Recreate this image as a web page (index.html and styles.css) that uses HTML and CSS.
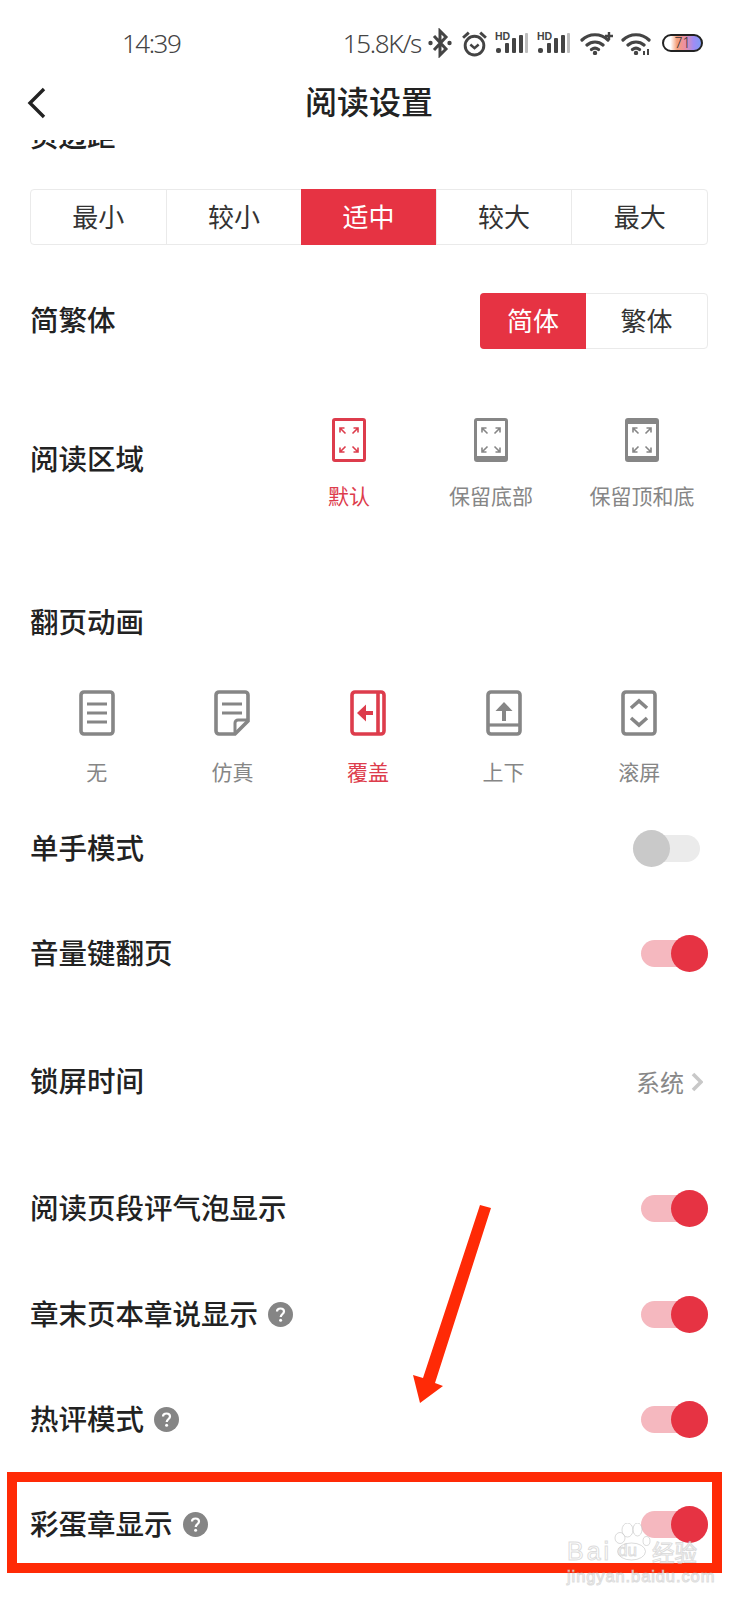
FILE: index.html
```html
<!DOCTYPE html>
<html lang="zh-CN">
<head>
    <meta charset="UTF-8">
    <meta name="viewport" content="width=device-width, initial-scale=1.0">
    <title>阅读设置</title>
    <link rel="stylesheet" href="styles.css">
</head>
<body>
    <svg class="defs" width="0" height="0">
        <symbol id="signal-bars" viewBox="0 0 36 24">
            <rect x="2" y="17" width="5" height="5" rx="2"/>
            <rect x="11" y="12" width="4" height="10" rx="1"/>
            <rect x="18" y="7" width="4" height="15" rx="1"/>
            <rect x="25" y="4" width="4" height="18" rx="1"/>
            <rect x="31" y="2" width="3" height="20" rx="1" fill="#bdbdbd"/>
        </symbol>
        <symbol id="wifi" viewBox="0 0 30 24">
            <path d="M2 9C9 2 21 2 28 9M7 14C11.500 10 18.500 10 23 14M11.500 18.500C13.500 17 16.500 17 18.500 18.500" fill="none" stroke="#444" stroke-width="3.200" stroke-linecap="round"/>
            <circle cx="15" cy="22" r="2.200" fill="#444"/>
        </symbol>
        <symbol id="expand-arrows" viewBox="0 0 34 44">
            <path d="M8 10l5.500 5.500M8 14.500V10h4.500M26 10l-5.500 5.500M26 14.500V10h-4.500M8 34l5.500-5.500M8 29.500V34h4.500M26 34l-5.500-5.500M26 29.500V34h-4.500" fill="none" stroke="currentColor" stroke-width="1.600"/>
        </symbol>
        <symbol id="help" viewBox="0 0 25 25">
            <circle cx="12.500" cy="12.500" r="12.500" fill="#858585"/>
            <path d="M9 9.500C9 7.500 10.500 6.500 12.500 6.500S16 7.700 16 9.500C16 12 13 12 12.700 15" fill="none" stroke="#fff" stroke-width="2.200"/>
            <circle cx="12.600" cy="18.300" r="1.500" fill="#fff"/>
        </symbol>
    </svg>

    <div class="page">
        <div class="status-bar">
            <span class="status-time">14:39</span>
            <div class="status-right">
                <span class="status-speed">15.8K/s</span>
                <svg class="ic-bt" viewBox="0 0 24 30"><path d="M6 8l12 13-6 6V3l6 6L6 22" fill="none" stroke="#444" stroke-width="3"/><circle cx="2.500" cy="15" r="2.200" fill="#444"/><circle cx="21.500" cy="15" r="2.200" fill="#444"/></svg>
                <svg class="ic-alarm" viewBox="0 0 26 26"><circle cx="13" cy="15" r="9" fill="none" stroke="#444" stroke-width="2.800"/><path d="M9 14l4 3.500 4-3.500" fill="none" stroke="#444" stroke-width="2.400"/><path d="M2 7.500L7.500 2.500M24 7.500L18.500 2.500" fill="none" stroke="#444" stroke-width="2.800"/></svg>
                <svg class="ic-signal" viewBox="0 0 36 24"><text x="1" y="9" class="hd-text">HD</text><use href="#signal-bars" width="36" height="24"/></svg>
                <svg class="ic-signal" viewBox="0 0 36 24"><text x="1" y="9" class="hd-text">HD</text><use href="#signal-bars" width="36" height="24"/></svg>
                <svg class="ic-wifi-plus" viewBox="0 0 34 24"><use href="#wifi" width="30" height="24"/><path d="M25 5h8M29 1v8" stroke="#444" stroke-width="2.400"/></svg>
                <svg class="ic-wifi" viewBox="0 0 32 24"><use href="#wifi" width="30" height="24"/><path d="M23 20v4M27 18v6" stroke="#444" stroke-width="2"/></svg>
                <div class="battery"><span class="battery-num">71</span></div>
            </div>
        </div>

        <div class="nav-bar">
            <svg class="nav-back" viewBox="0 0 20 32"><path d="M17 2L3 16l14 14" fill="none" stroke="#222" stroke-width="3.400"/></svg>
            <h1 class="nav-title">阅读设置</h1>
        </div>

        <div class="settings">
            <div class="cut-label"><span>页边距</span></div>

            <div class="segment segment-five">
                <div class="segment-item">最小</div>
                <div class="segment-item">较小</div>
                <div class="segment-item active">适中</div>
                <div class="segment-item">较大</div>
                <div class="segment-item">最大</div>
            </div>

            <div class="script-row">
                <div class="label">简繁体</div>
                <div class="segment segment-two">
                    <div class="segment-item active">简体</div>
                    <div class="segment-item">繁体</div>
                </div>
            </div>

            <div class="area-row">
                <div class="label area-label">阅读区域</div>
                <div class="area-options">
                    <div class="option active">
                        <div class="frame frame-plain"><svg><use href="#expand-arrows"/></svg></div>
                        <span>默认</span>
                    </div>
                    <div class="option">
                        <div class="frame frame-bottom"><svg><use href="#expand-arrows"/></svg></div>
                        <span>保留底部</span>
                    </div>
                    <div class="option">
                        <div class="frame frame-both"><svg><use href="#expand-arrows"/></svg></div>
                        <span>保留顶和底</span>
                    </div>
                </div>
            </div>

            <div class="label anim-title">翻页动画</div>
            <div class="anim-options">
                <div class="option">
                    <svg class="anim-icon" viewBox="0 0 36 46"><rect x="2" y="2" width="32" height="42" rx="3" fill="none" stroke="currentColor" stroke-width="3.600"/><path d="M8 14h20M8 23h20M8 32h20" stroke="currentColor" stroke-width="3.200"/></svg>
                    <span>无</span>
                </div>
                <div class="option">
                    <svg class="anim-icon" viewBox="0 0 36 46"><path d="M5 2h26a3 3 0 0 1 3 3v26L21 44H5a3 3 0 0 1-3-3V5a3 3 0 0 1 3-3z" fill="none" stroke="currentColor" stroke-width="3.600"/><path d="M8 14h20M8 23h20" stroke="currentColor" stroke-width="3.200"/><path d="M34 30H24a3 3 0 0 0-3 3v11" fill="none" stroke="currentColor" stroke-width="3"/></svg>
                    <span>仿真</span>
                </div>
                <div class="option active">
                    <svg class="anim-icon" viewBox="0 0 36 46"><rect x="2" y="2" width="32" height="42" rx="3" fill="none" stroke="currentColor" stroke-width="3.600"/><path d="M28 2v42" stroke="currentColor" stroke-width="3.600"/><path d="M23 23H12" stroke="currentColor" stroke-width="4"/><path d="M16 14.500L7 23l9 8.500z" fill="currentColor"/></svg>
                    <span>覆盖</span>
                </div>
                <div class="option">
                    <svg class="anim-icon" viewBox="0 0 36 46"><rect x="2" y="2" width="32" height="42" rx="3" fill="none" stroke="currentColor" stroke-width="3.600"/><path d="M2 35h32" stroke="currentColor" stroke-width="3.200"/><path d="M18 31V19" stroke="currentColor" stroke-width="4"/><path d="M9.500 21L18 12l8.500 9z" fill="currentColor"/></svg>
                    <span>上下</span>
                </div>
                <div class="option">
                    <svg class="anim-icon" viewBox="0 0 36 46"><rect x="2" y="2" width="32" height="42" rx="3" fill="none" stroke="currentColor" stroke-width="3.600"/><path d="M10 18l8-7 8 7M10 28l8 7 8-7" fill="none" stroke="currentColor" stroke-width="3.600"/></svg>
                    <span>滚屏</span>
                </div>
            </div>

            <div class="rows">
                <div class="row">
                    <div class="label">单手模式</div>
                    <div class="toggle off"></div>
                </div>
                <div class="row">
                    <div class="label">音量键翻页</div>
                    <div class="toggle"></div>
                </div>
                <div class="row row-spaced">
                    <div class="label">锁屏时间</div>
                    <div class="row-value">
                        系统
                        <svg class="value-arrow" viewBox="0 0 12 20"><path d="M2 2l8 8-8 8" fill="none" stroke="#c8c8c8" stroke-width="3.600"/></svg>
                    </div>
                </div>
                <div class="row row-bubble">
                    <div class="label">阅读页段评气泡显示</div>
                    <div class="toggle"></div>
                </div>
                <div class="row row-after">
                    <div class="label">章末页本章说显示<svg class="help"><use href="#help"/></svg></div>
                    <div class="toggle"></div>
                </div>
                <div class="row">
                    <div class="label">热评模式<svg class="help"><use href="#help"/></svg></div>
                    <div class="toggle"></div>
                </div>
                <div class="row">
                    <div class="label">彩蛋章显示<svg class="help"><use href="#help"/></svg></div>
                    <div class="toggle"></div>
                </div>
            </div>
        </div>

        <!-- красная разметка поверх скриншота -->
        <svg class="mark-arrow" viewBox="0 0 90 210"><path d="M68 0L79 3 23 178 31 181 8 198 1 170 11 173z" fill="#ff2a06"/></svg>
        <div class="mark-box"></div>

        <div class="watermark">
            <svg class="wm-paw" viewBox="0 0 42 38"><ellipse cx="10" cy="15" rx="5" ry="5.500"/><ellipse cx="17.500" cy="7" rx="5.500" ry="7"/><ellipse cx="27.500" cy="6.500" rx="4.500" ry="6.500"/><ellipse cx="36.500" cy="18" rx="3.500" ry="4.500"/><ellipse cx="21.500" cy="28.500" rx="14" ry="8.500"/></svg>
            <div class="wm-logo"><span class="wm-bai">Bai</span><span class="wm-du">du</span><span class="wm-cn">经验</span></div>
            <div class="wm-url">jingyan.baidu.com</div>
        </div>
    </div>
</body>
</html>
```

FILE: styles.css
```css
* {
    box-sizing: border-box;
}

body {
    margin: 0;
    background-color: #ffffff;
    font-family: "Noto Sans CJK SC", "Noto Sans", sans-serif;
    color: #222222;
    overflow-x: hidden;
}

.defs {
    position: absolute;
}

.hd-text {
    font-family: "Liberation Sans", sans-serif;
    font-size: 10.500px;
    font-weight: 700;
    fill: #444444;
}

.page {
    position: relative;
    width: 738px;
    height: 1600px;
    overflow: hidden;
}

/* status bar */
.status-bar {
    height: 80px;
    padding: 6px 35px 0 122px;
    display: flex;
    align-items: center;
    justify-content: space-between;
    font-family: "Noto Sans", sans-serif;
    font-size: 26px;
    color: #444444;
}

.status-time {
    font-weight: 300;
    letter-spacing: -1.500px;
}

.status-right {
    display: flex;
    align-items: center;
}

.status-speed {
    font-weight: 300;
    letter-spacing: -1.300px;
    margin-right: 7px;
}

.ic-bt {
    width: 24px;
    height: 30px;
}

.ic-alarm {
    width: 27px;
    height: 27px;
    margin-left: 9px;
}

.ic-signal {
    width: 36px;
    height: 24px;
    fill: #444444;
    margin-left: 6px;
}

.ic-wifi-plus {
    width: 34px;
    height: 24px;
    margin-left: 8px;
}

.ic-wifi {
    width: 32px;
    height: 24px;
    margin-left: 7px;
}

.battery {
    width: 41px;
    height: 18px;
    margin-left: 9px;
    border: 2px solid #222222;
    border-radius: 9px;
    background: linear-gradient(90deg, #ffffff 0%, #ffffff 18%, #f5a07a 35%, #ee8fa0 55%, #a08cf5 80%, #7f9cf5 100%);
    font-size: 14px;
    line-height: 14px;
    text-align: center;
    color: #333333;
}

.battery-num {
    font-weight: 300;
}

/* nav */
.nav-bar {
    height: 60px;
    padding-bottom: 20px;
    display: flex;
    align-items: center;
    justify-content: center;
    position: relative;
}

.nav-back {
    position: absolute;
    left: 27px;
    top: 7px;
    width: 20px;
    height: 32px;
}

.nav-title {
    margin: 0;
    font-size: 32px;
    font-weight: 500;
    line-height: 40px;
}

/* settings */
.settings {
    padding: 0 30px;
}

.label {
    font-size: 28.500px;
    font-weight: 500;
    line-height: 36px;
    padding-bottom: 4px;
    display: flex;
    align-items: center;
}

.cut-label {
    height: 10px;
    overflow: hidden;
    display: flex;
    align-items: flex-end;
    font-size: 28.500px;
    font-weight: 500;
    line-height: 30px;
}

.cut-label span {
    display: block;
    flex: none;
}

.segment {
    display: flex;
    border: 1px solid #eaeaea;
    border-radius: 4px;
    height: 56px;
    font-size: 26px;
    color: #333333;
}

.segment-five {
    margin-top: 39px;
    width: 678px;
}

.segment-two {
    width: 228px;
}

.segment-item {
    flex: 1;
    display: flex;
    align-items: center;
    justify-content: center;
    padding-bottom: 3px;
    border-left: 1px solid #eaeaea;
}

.segment-item:first-child {
    border-left: none;
}

.segment-item.active {
    margin: -1px 0;
    background-color: #e63343;
    color: #ffffff;
    border-left: none;
}

.segment-two .segment-item.active {
    flex: none;
    width: 106px;
    margin: -1px 0 -1px -1px;
    border-radius: 4px 0 0 4px;
}

.segment-two .segment-item {
    border-left: none;
}

.script-row {
    margin-top: 48px;
    display: flex;
    align-items: center;
    justify-content: space-between;
}

.area-row {
    margin-top: 69px;
    height: 94px;
    display: flex;
    align-items: flex-start;
    justify-content: space-between;
}

.area-label {
    margin-top: 22px;
}

.area-options {
    display: grid;
    grid-template-columns: 120px 164px 138px;
    margin-right: -3px;
}

.option {
    display: flex;
    flex-direction: column;
    align-items: center;
    color: #868686;
    font-size: 21px;
    line-height: 30px;
}

.option.active {
    color: #dd3c4c;
}

.frame {
    width: 34px;
    height: 44px;
    margin-bottom: 18px;
    border: 3px solid currentColor;
    border-radius: 3px;
    position: relative;
}

.frame svg {
    position: absolute;
    left: -3px;
    top: -3px;
    width: 34px;
    height: 44px;
}

.frame-bottom {
    border-bottom-width: 6px;
}

.frame-both {
    border-top-width: 6px;
    border-bottom-width: 6px;
}

.frame-both svg {
    top: -6px;
}

.anim-title {
    margin-top: 91px;
}

.anim-options {
    margin: 47px 0 0 -1px;
    display: grid;
    grid-template-columns: repeat(5, 1fr);
    width: 678px;
}

.anim-icon {
    width: 36px;
    height: 46px;
    margin-bottom: 20px;
}

/* rows */
.rows {
    margin-top: 10px;
}

.row {
    height: 105px;
    display: flex;
    align-items: center;
    justify-content: space-between;
}

.row-spaced {
    margin-top: 23px;
}

.row-bubble {
    margin-top: 22px;
}

.row-after {
    margin-top: 1px;
}

.help {
    width: 25px;
    height: 25px;
    margin: 4px 0 0 10px;
}

.toggle {
    position: relative;
    width: 67px;
    height: 27px;
    border-radius: 14px;
    background-color: #f5b8bf;
}

.toggle::after {
    content: "";
    position: absolute;
    right: 0;
    top: -5px;
    width: 37px;
    height: 37px;
    border-radius: 50%;
    background-color: #e63343;
}

.toggle.off {
    margin-right: 8px;
    background-color: #ebebeb;
}

.toggle.off::after {
    left: 0;
    right: auto;
    background-color: #c9c9c9;
}

.row-value {
    display: flex;
    align-items: center;
    font-size: 24px;
    color: #888888;
    margin-right: 5px;
}

.value-arrow {
    width: 12px;
    height: 20px;
    margin-left: 7px;
}

/* annotation */
.mark-arrow {
    position: absolute;
    left: 412px;
    top: 1205px;
    width: 90px;
    height: 210px;
}

.mark-box {
    position: absolute;
    left: 7px;
    top: 1472px;
    width: 715px;
    height: 101px;
    border: 10px solid #ff2a06;
}

/* baidu watermark */
.watermark {
    position: absolute;
    left: 567px;
    top: 1535px;
    width: 140px;
    color: rgba(255, 255, 255, 0.75);
    font-family: "Liberation Sans", sans-serif;
    -webkit-text-stroke: 1px rgba(190, 190, 190, 0.55);
}

.wm-paw {
    position: absolute;
    left: 43px;
    top: -12px;
    width: 42px;
    height: 38px;
    fill: rgba(255, 255, 255, 0.55);
    stroke: rgba(190, 190, 190, 0.55);
}

.wm-logo {
    position: relative;
    display: flex;
    align-items: center;
    line-height: 32px;
}

.wm-bai {
    width: 51px;
    font-size: 25px;
    letter-spacing: 3px;
}

.wm-du {
    width: 34px;
    font-size: 17px;
}

.wm-cn {
    font-family: "Noto Sans CJK SC", sans-serif;
    font-size: 22.500px;
}

.wm-url {
    position: relative;
    font-size: 16.500px;
    line-height: 18px;
    letter-spacing: 0.900px;
    white-space: nowrap;
}
```
